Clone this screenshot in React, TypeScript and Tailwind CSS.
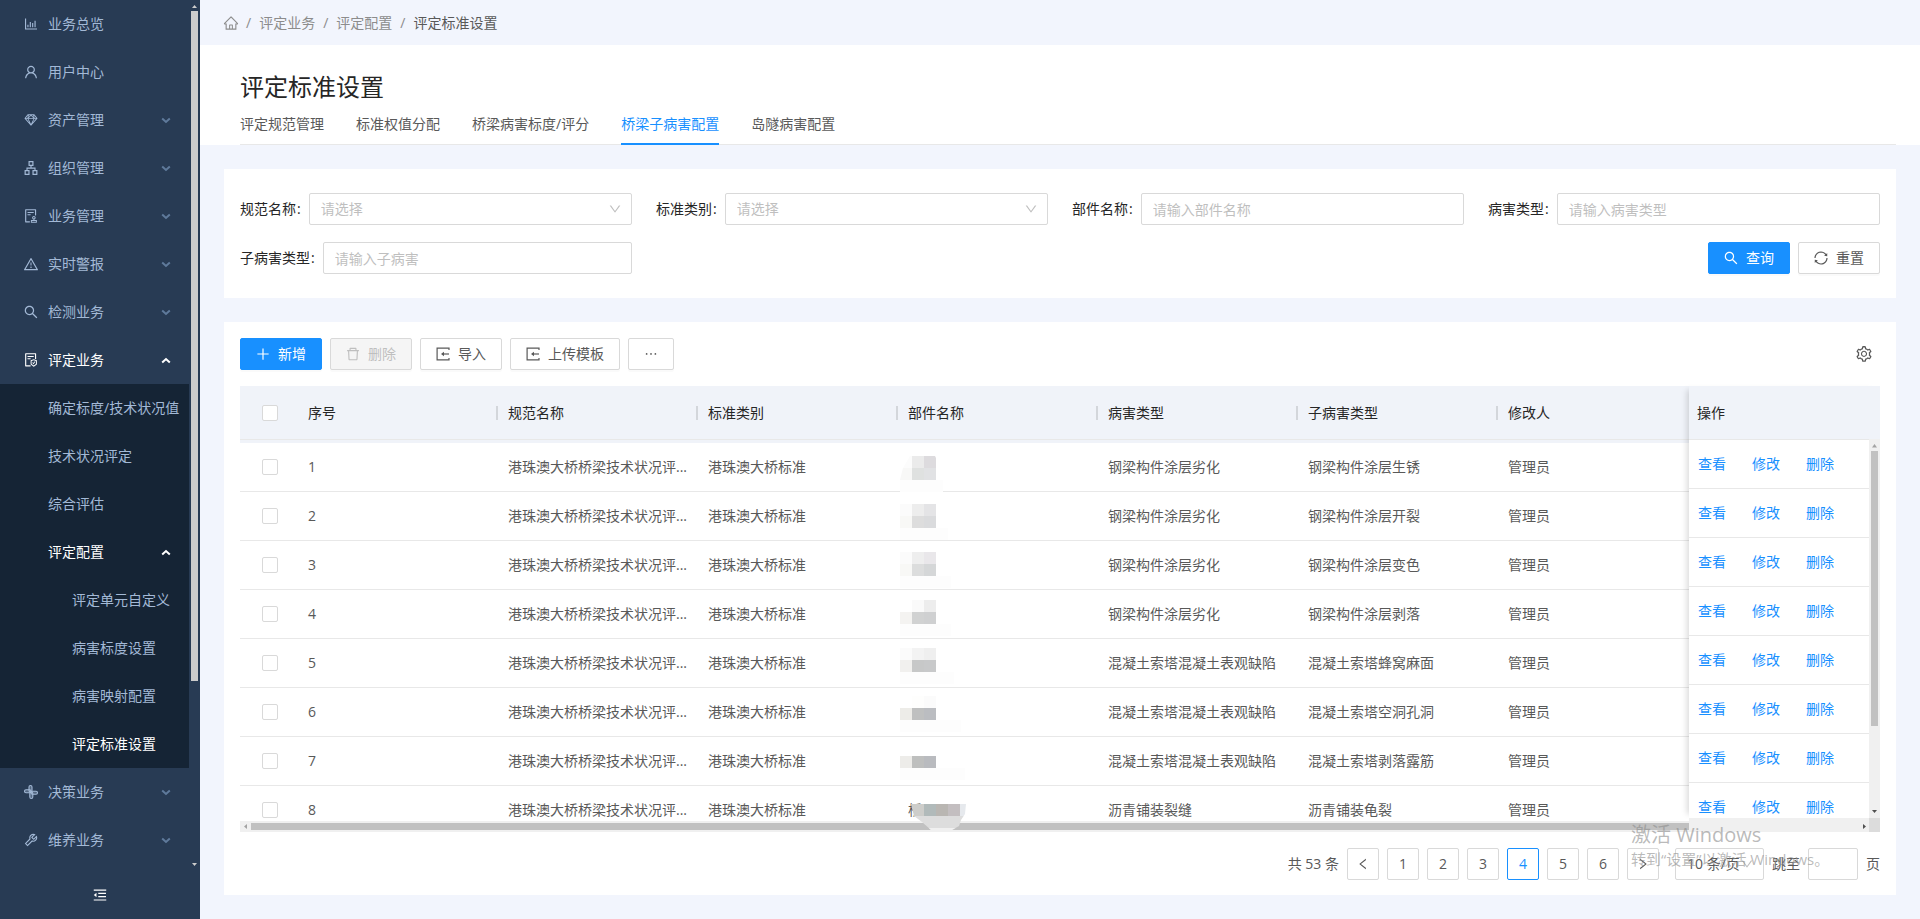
import { useState } from 'react';
import type { ReactNode } from 'react';
import {
  AiOutlineApartment,
  AiOutlineAudit,
  AiOutlineBarChart,
  AiOutlineDelete,
  AiOutlineDown,
  AiOutlineEllipsis,
  AiOutlineFileProtect,
  AiOutlineHome,
  AiOutlineLeft,
  AiOutlineMenuFold,
  AiOutlinePlus,
  AiOutlineRight,
  AiOutlineSearch,
  AiOutlineSetting,
  AiOutlineSketch,
  AiOutlineSync,
  AiOutlineTool,
  AiOutlineUser,
  AiOutlineWarning,
} from 'react-icons/ai';

interface MenuItem {
  label: string;
  icon?: (props: { className?: string }) => ReactNode;
  children?: MenuItem[];
  expandable?: boolean;
  active?: boolean;
}

// Pinwheel of four rounded bars
function PinwheelIcon({ className }: { className?: string }) {
  return (
    <svg className={className} viewBox="0 0 16 16" fill="currentColor" fillOpacity="0.35" stroke="currentColor" strokeWidth="1.1">
      <rect x="6" y="1.500" width="3" height="6.500" rx="1.500" />
      <rect x="8" y="7.200" width="6.500" height="3" rx="1.500" />
      <rect x="6.800" y="8" width="3" height="6.500" rx="1.500" />
      <rect x="1.500" y="5.800" width="6.500" height="3" rx="1.500" />
    </svg>
  );
}

// Box open on the right with an arrow pointing in
function ImportIcon({ className }: { className?: string }) {
  return (
    <svg className={className} viewBox="0 0 16 16" fill="none" stroke="currentColor" strokeWidth="1.2">
      <path d="M14 4V2.100H2.100v11.800H14V12" />
      <path d="M14 8H8.500" />
      <path d="M9 5.800v4.400L6 8z" fill="currentColor" stroke="none" />
    </svg>
  );
}

const menu: MenuItem[] = [
  { label: '业务总览', icon: AiOutlineBarChart },
  { label: '用户中心', icon: AiOutlineUser },
  { label: '资产管理', icon: AiOutlineSketch, expandable: true },
  { label: '组织管理', icon: AiOutlineApartment, expandable: true },
  { label: '业务管理', icon: AiOutlineAudit, expandable: true },
  { label: '实时警报', icon: AiOutlineWarning, expandable: true },
  { label: '检测业务', icon: AiOutlineSearch, expandable: true },
  {
    label: '评定业务',
    icon: AiOutlineFileProtect,
    expandable: true,
    active: true,
    children: [
      { label: '确定标度/技术状况值' },
      { label: '技术状况评定' },
      { label: '综合评估' },
      {
        label: '评定配置',
        expandable: true,
        active: true,
        children: [
          { label: '评定单元自定义' },
          { label: '病害标度设置' },
          { label: '病害映射配置' },
          { label: '评定标准设置', active: true },
        ],
      },
    ],
  },
  { label: '决策业务', icon: PinwheelIcon, expandable: true },
  { label: '维养业务', icon: AiOutlineTool, expandable: true },
];

const tabs = ['评定规范管理', '标准权值分配', '桥梁病害标度/评分', '桥梁子病害配置', '岛隧病害配置'];

const columns = ['序号', '规范名称', '标准类别', '部件名称', '病害类型', '子病害类型', '修改人'];

const rows = [
  { part: '', type: '钢梁构件涂层劣化', subType: '钢梁构件涂层生锈' },
  { part: '', type: '钢梁构件涂层劣化', subType: '钢梁构件涂层开裂' },
  { part: '', type: '钢梁构件涂层劣化', subType: '钢梁构件涂层变色' },
  { part: '', type: '钢梁构件涂层劣化', subType: '钢梁构件涂层剥落' },
  { part: '', type: '混凝土索塔混凝土表观缺陷', subType: '混凝土索塔蜂窝麻面' },
  { part: '', type: '混凝土索塔混凝土表观缺陷', subType: '混凝土索塔空洞孔洞' },
  { part: '', type: '混凝土索塔混凝土表观缺陷', subType: '混凝土索塔剥落露筋' },
  { part: '桥', type: '沥青铺装裂缝', subType: '沥青铺装龟裂' },
];

// Masked part names: six 12px cells per row, then the width of the light strip below
const masks: { cells: string[]; strip: number }[] = [
  { cells: ['#fcfcfc', '#ebebeb', '#dddbde', '#f8f8f7', '#dfe1e0', '#e1e2e4'], strip: 43 },
  { cells: ['#fbfbfb', '#ededed', '#e4e4e6', '#f8f8f6', '#dddddd', '#dadbdd'], strip: 48 },
  { cells: ['#fbfbfb', '#eeeeee', '#e9e7ea', '#f8f8f6', '#dcdddd', '#d5d7d8'], strip: 51 },
  { cells: ['#ffffff', '#fafafa', '#ededed', '#f4f3f1', '#d1d2d2', '#cfd0d1'], strip: 51 },
  { cells: ['#fbfbfb', '#f3f3f3', '#efefef', '#f1f0ee', '#c7c8c8', '#c8c9ca'], strip: 54 },
  { cells: ['#ffffff', '#fefefd', '#fbfbfb', '#edece8', '#bfc0c0', '#bbbdc1'], strip: 61 },
  { cells: ['#ffffff', '#ffffff', '#ffffff', '#edece9', '#bebfbe', '#b9bbbf'], strip: 65 },
];

function Caret({ up = false }: { up?: boolean }) {
  return (
    <svg width="10" height="7" viewBox="0 0 10 7" fill="none" stroke="currentColor" strokeWidth="2">
      <path d={up ? 'M1.200 5.500L5 2l3.800 3.500' : 'M1.200 1.500L5 5l3.800-3.500'} />
    </svg>
  );
}

function MenuRow({ item, level = 0 }: { item: MenuItem; level?: number }) {
  const Icon = item.icon;
  const indent = level === 2 ? 'pl-[72px]' : Icon ? 'pl-6' : 'pl-12';
  const color = item.active ? 'text-white' : 'text-[#a3b9d6]';

  return (
    <li>
      <a href="#" className={`flex h-12 items-center whitespace-nowrap pr-[18px] ${indent} ${color}`}>
        {Icon && (
          <span className="mr-[10px]">
            <Icon className="-mx-px h-4 w-4" />
          </span>
        )}
        <span className="grow">{item.label}</span>
        {item.expandable && (
          <span className={item.active ? '' : 'text-[#5f7a9b]'}>
            <Caret up={item.active} />
          </span>
        )}
      </a>
      {item.children && (
        <ul className="bg-[#152435]">
          {item.children.map((child) => (
            <MenuRow key={child.label} item={child} level={level + 1} />
          ))}
        </ul>
      )}
    </li>
  );
}

function Sidebar() {
  return (
    <aside className="flex w-[200px] shrink-0 flex-col bg-[#283b54]">
      <div className="flex grow">
        <nav className="w-[189px]">
          <ul>
            {menu.map((item) => (
              <MenuRow key={item.label} item={item} />
            ))}
          </ul>
        </nav>
        <div className="flex grow flex-col items-center text-[#cccccc]">
          <svg width="11" height="11" viewBox="0 0 11 11" fill="currentColor">
            <path d="M5.500 5L8 8H3z" />
          </svg>
          <div className="w-[7px] grow bg-[#cccccc]" />
          <div className="h-[179px]" />
          <svg width="11" height="11" viewBox="0 0 11 11" fill="currentColor">
            <path d="M3 3h5L5.500 6z" />
          </svg>
        </div>
      </div>
      <button type="button" aria-label="收起菜单" className="flex h-12 items-center justify-center text-white">
        <AiOutlineMenuFold className="h-4 w-4" />
      </button>
    </aside>
  );
}

const controlClass =
  'h-8 w-full rounded-xs border border-[#d9d9d9] bg-white px-[11px] text-sm text-[#595959] outline-none placeholder:text-[#bfbfbf]';

function Field({ id, label, placeholder, select = false }: { id: string; label: string; placeholder: string; select?: boolean }) {
  return (
    <div className="flex items-center">
      <label htmlFor={id} className="mr-2 shrink-0 text-[#262626]">
        {label}
        <span className="ml-px">:</span>
      </label>
      <div className="relative grow">
        {select ? (
          <>
            <select id={id} className={`${controlClass} appearance-none text-[#bfbfbf]`}>
              <option>{placeholder}</option>
            </select>
            <AiOutlineDown className="pointer-events-none absolute right-[10px] top-[9px] h-[14px] w-[14px] text-[#bfbfbf]" />
          </>
        ) : (
          <input id={id} type="text" placeholder={placeholder} className={controlClass} />
        )}
      </div>
    </div>
  );
}

function Button({ icon, children, variant = 'default' }: { icon: ReactNode; children?: ReactNode; variant?: 'default' | 'primary' | 'disabled' }) {
  const styles = {
    default: 'border-[#d9d9d9] bg-white text-[#595959]',
    primary: 'border-[#1890ff] bg-[#1890ff] text-white',
    disabled: 'border-[#d9d9d9] bg-[#f5f5f5] text-[#bfbfbf]',
  };
  return (
    <button
      type="button"
      disabled={variant === 'disabled'}
      className={`flex h-8 items-center gap-2 rounded-xs border px-[15px] shadow-[0_2px_0_rgba(0,0,0,0.02)] ${styles[variant]}`}
    >
      {icon}
      {children}
    </button>
  );
}

function Checkbox({ label }: { label: string }) {
  return (
    <input
      type="checkbox"
      aria-label={label}
      className="block h-4 w-4 appearance-none rounded-xs border border-[#d9d9d9] bg-white checked:bg-[#1890ff]"
    />
  );
}

function MaskedNames() {
  return (
    <svg
      className="pointer-events-none absolute left-[660px] top-[70px]"
      width="72"
      height="376"
      viewBox="0 0 72 376"
      shapeRendering="crispEdges"
    >
      <defs>
        <clipPath id="mask-top">
          <path d="M10 0H35L36 2V360H0V24L3 12z" />
        </clipPath>
        <clipPath id="mask-bottom">
          <path d="M11 348H66L65 358L61 364L59 370L52 374H31L22 366L14 360z" />
        </clipPath>
      </defs>
      {masks.map((mask, row) => (
        <g key={row}>
          <g clipPath="url(#mask-top)">
            {mask.cells.map((fill, i) => (
              <rect key={i} x={(i % 3) * 12} y={row * 48 + Math.floor(i / 3) * 12} width="12" height="12" fill={fill} />
            ))}
          </g>
          <rect x="0" y={row * 48 + 24} width={mask.strip} height="12" fill="#fdfdfd" />
        </g>
      ))}
      <g clipPath="url(#mask-bottom)">
        <rect x="11" y="348" width="13" height="12" fill="#cdcdca" />
        <rect x="24" y="348" width="12" height="12" fill="#b1baba" />
        <rect x="36" y="348" width="12" height="12" fill="#b9b6b2" />
        <rect x="48" y="348" width="12" height="12" fill="#c3bec0" />
        <rect x="60" y="348" width="12" height="12" fill="#e6e9ed" />
        <rect x="11" y="360" width="61" height="14" fill="#dddddd" />
        <rect x="28" y="372" width="30" height="2" fill="#f0f0f0" />
      </g>
    </svg>
  );
}

function DefectTable() {
  const cell = 'whitespace-nowrap border-b border-[#e8e8e8] px-2 py-0';

  return (
    <div className="relative mt-4 flex">
      <div className="min-w-0 grow">
        <div className="h-[435px] overflow-hidden">
          <table className="w-full min-w-[1460px] table-fixed border-separate border-spacing-0 text-left">
            <thead>
              <tr className="h-[57px] bg-[#f0f3f9] align-top">
                <th className="w-[60px] p-0">
                  <div className="flex h-[54px] items-center border-b border-[#e8e8e8] pl-[22px]">
                    <Checkbox label="全选" />
                  </div>
                </th>
                {columns.map((name) => (
                  <th key={name} className="p-0 font-normal text-[#262626]">
                    <div className="flex h-[54px] items-center justify-between border-b border-[#e8e8e8] pl-2 pr-[2px]">
                      {name}
                      <span className="h-[14px] w-[2px] bg-[#d3d6db]" />
                    </div>
                  </th>
                ))}
              </tr>
            </thead>
            <tbody>
              {rows.map((row, i) => (
                <tr key={i} className="h-[49px]">
                  <td className="border-b border-[#e8e8e8] py-0 pl-[22px] pr-0">
                    <Checkbox label={`选择第 ${i + 1} 行`} />
                  </td>
                  <td className={cell}>{i + 1}</td>
                  <td className={cell}>港珠澳大桥桥梁技术状况评...</td>
                  <td className={cell}>港珠澳大桥标准</td>
                  <td className={cell}>{row.part}</td>
                  <td className={cell}>{row.type}</td>
                  <td className={cell}>{row.subType}</td>
                  <td className={cell}>管理员</td>
                </tr>
              ))}
            </tbody>
          </table>
        </div>
        <div className="flex h-[11px] items-center bg-[#f0f0f0]">
          <svg width="11" height="11" viewBox="0 0 11 11" fill="#a3a3a3">
            <path d="M7 3v5L4 5.500z" />
          </svg>
          <div className="h-[7px] grow bg-[#c1c1c1]" />
        </div>
      </div>

      {/* Fixed actions column */}
      <div className="z-10 w-[191px] shrink-0">
        <div className="shadow-[-6px_0_6px_-4px_rgba(0,0,0,0.15)]">
          <div className="flex h-[54px] items-center bg-[#f0f3f9] pl-2 text-[#262626]">操作</div>
          <div className="-mt-px flex h-[379px] overflow-hidden">
            <ul className="grow border-t border-[#e8e8e8] bg-white">
              {rows.map((_, i) => (
                <li key={i} className="flex h-[49px] items-center gap-[26px] border-b border-[#e8e8e8] pl-[9px] text-[#1890ff]">
                  <a href="#">查看</a>
                  <a href="#">修改</a>
                  <a href="#">删除</a>
                </li>
              ))}
            </ul>
            <div className="flex w-[11px] flex-col items-center bg-[#f0f0f0]">
              <svg width="11" height="12" viewBox="0 0 11 12" fill="#a3a3a3">
                <path d="M5.500 5L8 8.500H3z" />
              </svg>
              <div className="h-[275px] w-[7px] bg-[#c1c1c1]" />
              <svg className="mt-auto" width="11" height="11" viewBox="0 0 11 11" fill="#505050">
                <path d="M3 3h5L5.500 6z" />
              </svg>
            </div>
          </div>
        </div>
        <div className="flex h-[14px] bg-[#f0f0f0]">
          <svg className="ml-auto" width="11" height="14" viewBox="0 0 11 14" fill="#505050">
            <path d="M5 6v5l3-2.500z" />
          </svg>
          <div className="w-[11px] bg-[#dcdcdc]" />
        </div>
      </div>

      <MaskedNames />
    </div>
  );
}

function Pagination() {
  const [page, setPage] = useState(4);
  const box = 'flex h-8 w-8 items-center justify-center rounded-xs border';

  return (
    <div className="mt-4 flex items-center justify-end gap-2">
      <span>共 53 条</span>
      <button type="button" aria-label="上一页" className={`${box} border-[#d9d9d9]`}>
        <AiOutlineLeft className="h-[14px] w-[14px]" />
      </button>
      {[1, 2, 3, 4, 5, 6].map((n) => (
        <button
          key={n}
          type="button"
          onClick={() => setPage(n)}
          className={`${box} ${n === page ? 'border-[#1890ff] text-[#1890ff]' : 'border-[#d9d9d9]'}`}
        >
          {n}
        </button>
      ))}
      <button type="button" aria-label="下一页" className={`${box} border-[#d9d9d9]`}>
        <AiOutlineRight className="h-[14px] w-[14px]" />
      </button>
      <div className="relative ml-2">
        <select
          aria-label="每页条数"
          className="block h-8 w-[89px] appearance-none rounded-xs border border-[#d9d9d9] bg-white pl-[11px] text-sm outline-none"
        >
          <option>10 条/页</option>
        </select>
        <AiOutlineDown className="pointer-events-none absolute right-[10px] top-[9px] h-[14px] w-[14px] text-[#bfbfbf]" />
      </div>
      <label htmlFor="jump">跳至</label>
      <input id="jump" type="text" className="h-8 w-[50px] rounded-xs border border-[#d9d9d9] bg-white px-2 outline-none" />
      <span>页</span>
    </div>
  );
}

export default function App() {
  return (
    <div
      className="relative flex min-h-screen bg-[#f2f5fd] text-sm text-[#595959]"
      style={{ fontFamily: '"Open Sans", "Noto Sans CJK SC", sans-serif' }}
    >
      <Sidebar />

      <main className="min-w-0 grow">
        <nav className="flex h-[45px] items-center gap-2 px-6 text-[#8c8c8c]">
          <a href="#" aria-label="首页">
            <AiOutlineHome className="-mx-px h-4 w-4" />
          </a>
          <span>/</span>
          <a href="#">评定业务</a>
          <span>/</span>
          <a href="#">评定配置</a>
          <span>/</span>
          <span className="text-[#595959]">评定标准设置</span>
        </nav>

        <header className="bg-white pl-10 pr-6 pt-[26px]">
          <h1 className="text-2xl leading-8 text-[#262626]">评定标准设置</h1>
          <div role="tablist" className="flex h-[42px] gap-8 border-b border-[#e8e8e8]">
            {tabs.map((tab, i) => (
              <button
                key={tab}
                type="button"
                role="tab"
                aria-selected={i === 3}
                className={`-mb-px border-b-2 pt-[2px] ${i === 3 ? 'border-[#1890ff] text-[#1890ff]' : 'border-transparent'}`}
              >
                {tab}
              </button>
            ))}
          </div>
        </header>

        <div className="space-y-6 p-6">
          <form className="bg-white px-4 py-6" onSubmit={(e) => e.preventDefault()}>
            <div className="grid grid-cols-4 gap-x-6 gap-y-[17px]">
              <Field id="spec" label="规范名称" placeholder="请选择" select />
              <Field id="category" label="标准类别" placeholder="请选择" select />
              <Field id="part" label="部件名称" placeholder="请输入部件名称" />
              <Field id="defect" label="病害类型" placeholder="请输入病害类型" />
              <Field id="sub-defect" label="子病害类型" placeholder="请输入子病害" />
              <div className="col-span-3 flex justify-end gap-2">
                <Button variant="primary" icon={<AiOutlineSearch className="-mx-px h-4 w-4" />}>
                  查询
                </Button>
                <Button icon={<AiOutlineSync className="-mx-px h-4 w-4" />}>重置</Button>
              </div>
            </div>
          </form>

          <section className="bg-white px-4 pb-[15px] pt-4">
            <div className="flex items-center gap-2">
              <Button variant="primary" icon={<AiOutlinePlus className="-mx-px h-4 w-4" />}>
                新增
              </Button>
              <Button variant="disabled" icon={<AiOutlineDelete className="-mx-px h-4 w-4" />}>
                删除
              </Button>
              <Button icon={<ImportIcon className="-mx-px h-4 w-4" />}>导入</Button>
              <Button icon={<ImportIcon className="-mx-px h-4 w-4" />}>上传模板</Button>
              <Button icon={<AiOutlineEllipsis aria-label="更多" className="-mx-px h-4 w-4" />} />
              <button type="button" aria-label="列设置" className="ml-auto mr-[7px]">
                <AiOutlineSetting className="h-[18px] w-[18px]" />
              </button>
            </div>
            <DefectTable />
            <Pagination />
          </section>
        </div>
      </main>

      {/* System activation notice */}
      <div className="pointer-events-none absolute bottom-[50px] right-[92px] z-20 w-[197px] whitespace-nowrap text-[#8c8c8c]/60">
        <p className="text-xl leading-7">激活 Windows</p>
        <p className="text-[15px] leading-5">转到“设置”以激活 Windows。</p>
      </div>
    </div>
  );
}
